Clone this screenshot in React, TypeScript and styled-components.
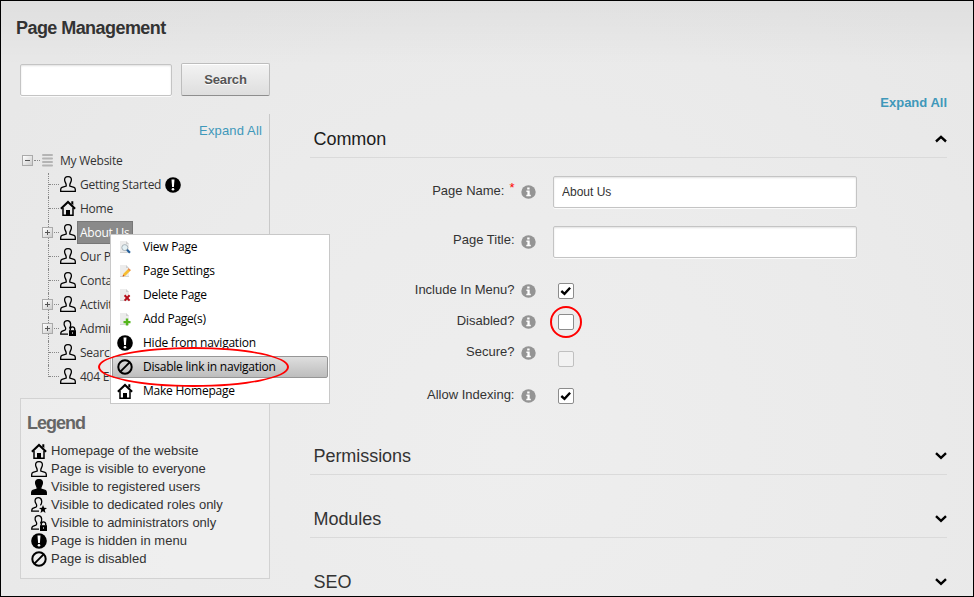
import React from "react";
import styled, { createGlobalStyle, css } from "styled-components";

const GlobalStyle = createGlobalStyle`
  *, *::before, *::after { box-sizing: border-box; }
  body { margin: 0; font-family: "Liberation Sans", Arial, sans-serif; font-size: 13px; color: #333; }
  h1, h2, h3, ul { margin: 0; padding: 0; font-weight: normal; }
  ul { list-style: none; }
  svg { display: block; flex: none; }
`;

const Frame = styled.div`
  position: relative;
  width: 974px;
  height: 597px;
  border: 1px solid #000;
  overflow: hidden;
  display: flex;
  flex-direction: column;
  background:
    linear-gradient(to bottom, rgba(0, 0, 0, 0.04), rgba(0, 0, 0, 0) 65px),
    radial-gradient(circle at 505px 450px, #eeeeee 0, #ebebeb 350px, #e8e8e8 600px);
`;

const Title = styled.h1`
  flex: none;
  height: 62px;
  padding: 16px 0 0 15px;
  font-size: 18px;
  line-height: 22px;
  font-weight: bold;
  letter-spacing: -0.56px;
`;

const Columns = styled.div`
  flex: none;
  display: flex;
  align-items: flex-start;
  gap: 40px;
  padding-left: 19px;
`;

const Sidebar = styled.aside`
  width: 250px;
`;

const SearchBar = styled.div`
  display: flex;
  justify-content: space-between;
  align-items: flex-end;
  height: 33px;
`;

const TextInput = styled.input<{ $width: number }>`
  display: block;
  width: ${(p) => p.$width}px;
  height: 32px;
  padding: 0 8px;
  border: 1px solid #c4c4c4;
  border-radius: 2px;
  background: #fff;
  box-shadow: inset 0 1px 2px rgba(0, 0, 0, 0.12), 0 1px 0 #fafafa;
  font: 12px "Liberation Sans", Arial, sans-serif;
  color: #333;
  outline: none;
`;

const SearchButton = styled.button`
  width: 89px;
  height: 33px;
  padding: 0;
  border: 1px solid #bdbdbd;
  border-bottom-color: #8e8e8e;
  border-radius: 2px;
  background: linear-gradient(#f3f3f3, #dedede);
  box-shadow: inset 0 1px 0 #fff;
  font: bold 13px "Liberation Sans", Arial, sans-serif;
  letter-spacing: -0.15px;
  color: #555;
  text-shadow: 0 1px 0 #fff;
`;

const ExpandLink = styled.a<{ $bold?: boolean }>`
  display: block;
  text-align: right;
  line-height: 16px;
  color: #3f98ba;
  font-weight: ${(p) => (p.$bold ? "bold" : "normal")};
  letter-spacing: ${(p) => (p.$bold ? "0" : "0.15px")};
`;

const TreePanel = styled.div`
  height: 284px;
  margin-top: 18px;
  padding: 9px 7px 0 0;
  border-right: 1px solid #c9c9c9;
`;

const segoeLike = css`
  font-family: "Open Sans", "Noto Sans", sans-serif;
  font-size: 12px;
  letter-spacing: -0.24px;
`;

const Tree = styled.ul`
  ${segoeLike}
  margin-top: 10px;
`;

const TreeRoot = styled.li`
  display: flex;
  align-items: center;
  height: 22px;
  padding-left: 2px;
`;

const RootDots = styled.span`
  width: 6px;
  margin: 0 1px 0 1px;
  border-top: 1px dotted #888;
`;

const RootLabel = styled.span`
  margin-left: 7px;
`;

const Branches = styled.ul`
  margin: 2px 0 0 28px;
`;

const Branch = styled.li`
  position: relative;
  display: flex;
  align-items: center;
  height: 24px;
  padding-left: 12px;

  &::before {
    content: "";
    position: absolute;
    left: 0;
    top: 0;
    height: 24px;
    border-left: 1px dotted #888;
  }
  &:last-child::before { height: 12px; }
  &::after {
    content: "";
    position: absolute;
    left: 1px;
    top: 11px;
    width: 10px;
    border-top: 1px dotted #888;
  }
`;

const Toggle = styled.span<{ $floating?: boolean }>`
  display: block;
  width: 11px;
  height: 11px;
  border: 1px solid #aaa;
  background: linear-gradient(135deg, #fff, #ccc);
  ${(p) =>
    p.$floating &&
    css`
      position: absolute;
      left: -6px;
      top: 6px;
      z-index: 1;
    `}
`;

const BranchIcon = styled.span`
  margin-top: -2px;
`;

const BranchLabel = styled.span<{ $selected?: boolean }>`
  height: 23px;
  line-height: 22px;
  padding: 0 3px;
  margin: 0 1px;
  white-space: nowrap;
  ${(p) =>
    p.$selected &&
    css`
      margin-top: -2px;
      padding: 0 3px 0 2px;
      line-height: 21px;
      border: 1px solid #777;
      background: #8a8a8a;
      color: #fff;
    `}
`;

const Legend = styled.section`
  height: 181px;
  padding: 13px 6px 0;
  border: 1px solid #d2d2d2;
  background: rgba(255, 255, 255, 0.2);
`;

const LegendTitle = styled.h2`
  margin-bottom: 7px;
  font-size: 18px;
  line-height: 22px;
  font-weight: bold;
  letter-spacing: -1px;
  color: #666;
`;

const LegendItem = styled.li`
  display: flex;
  align-items: center;
  height: 18px;
  padding: 1px 0 0 4px;
  gap: 4px;
  white-space: nowrap;
`;

const LegendText = styled.span`
  margin-top: -1px;
`;

const Main = styled.main`
  width: 637px;
  padding-top: 32px;
`;

const SectionHeader = styled.header<{ $height: number; $strong?: boolean }>`
  display: flex;
  align-items: flex-end;
  justify-content: space-between;
  height: ${(p) => p.$height}px;
  padding: 0 0 8px 3.5px;
  border-bottom: 1px solid #dadada;
  font-size: 18px;
  line-height: 20px;
  color: ${(p) => (p.$strong ? "#1c1c1c" : "#333")};
`;

const SectionTitle = styled.h3`
  font-size: 18px;
  letter-spacing: -0.05px;
`;

const Form = styled.form`
  height: 254px;
  padding-top: 18px;
`;

const Field = styled.div<{ $tall?: boolean; $gap: number }>`
  display: grid;
  grid-template-columns: 204.5px 16px 1fr;
  grid-template-rows: 100%;
  height: ${(p) => (p.$tall ? 32 : 16)}px;
  margin-bottom: ${(p) => p.$gap}px;
  align-items: center;
`;

const Label = styled.label<{ $lift: number }>`
  text-align: right;
  line-height: 16px;
  margin-top: -${(p) => p.$lift}px;
`;

const Required = styled.span`
  display: inline-block;
  margin-left: 5px;
  color: #f00;
  line-height: 10px;
  transform: translateY(-3px);
`;

const InfoSlot = styled.span`
  padding-left: 6px;
`;

const ControlSlot = styled.div`
  padding-left: 22.5px;
`;

const CheckBox = styled.span<{ $disabled?: boolean }>`
  display: flex;
  align-items: center;
  justify-content: center;
  width: 16px;
  height: 16px;
  margin: ${(p) => (p.$disabled ? "12px" : "0")} 0 0 5px;
  border: 1px solid ${(p) => (p.$disabled ? "#c0c0c0" : "#8c8c8c")};
  border-radius: 2px;
  background: ${(p) => (p.$disabled ? "#f2f2f2" : "#fff")};
`;

const Menu = styled.ul`
  ${segoeLike}
  position: absolute;
  left: 109px;
  top: 233px;
  width: 220px;
  height: 170px;
  padding: 0 1px;
  border: 1px solid #c8c8c8;
  background: #fff;
  color: #000;
`;

const MenuItem = styled.li<{ $active?: boolean }>`
  display: flex;
  align-items: center;
  height: 22px;
  margin: 1px 0 2px;
  padding-left: 4px;
  gap: 10px;
  border: 1px solid ${(p) => (p.$active ? "#969696" : "transparent")};
  border-radius: 2px;
  background: ${(p) => (p.$active ? "linear-gradient(#dedede, #bdbdbd)" : "none")};
  white-space: nowrap;
`;

const MenuText = styled.span`
  margin-top: -1px;
`;

const Highlight = styled.span<{ $x: number; $y: number; $w: number; $h: number }>`
  position: absolute;
  left: ${(p) => p.$x}px;
  top: ${(p) => p.$y}px;
  width: ${(p) => p.$w}px;
  height: ${(p) => p.$h}px;
  border: 2px solid #f00;
  border-radius: 50%;
  pointer-events: none;
`;

type IconName = "home" | "person" | "registered" | "role" | "admin" | "hidden" | "disabled";

const cutPerson =
  "M9.4 8.4C11.2 6.4 11.6 .7 7.4 .7C3.4 .7 3.6 4.6 5 6.7C5.9 8 6 9.6 4.8 10.2L1.8 11.4Q.7 12 .7 14.2H8";
const fullPerson =
  "M8 .7C5 .7 4.3 2.4 4.7 4.6C5 6.3 6.2 7.4 6.2 9V10L2 11.4Q.7 12 .7 13.5V15.3H15.3V13.5Q15.3 12 14 11.4L9.8 10V9C9.8 7.4 11 6.3 11.3 4.6C11.7 2.4 11 .7 8 .7Z";

function Icon({ name }: { name: IconName }) {
  return (
    <svg width="16" height="16" viewBox="0 0 16 16" fill="none" stroke="#000" strokeWidth="1.3">
      {name === "home" && (
        <>
          <path d="M11.3 1.2h2v4l-2-2z" fill="#000" stroke="none" />
          <path d="M.9 8.7 8 2l7.1 6.7" strokeWidth="2.1" />
          <path d="M3 8v7.2h10V8" strokeWidth="1.5" />
          <path d="M6 15.5V10h4v5.5z" fill="#000" stroke="none" />
        </>
      )}
      {name === "person" && <path d={fullPerson} />}
      {name === "registered" && <path d={fullPerson} fill="#000" />}
      {name === "role" && (
        <>
          <path d={cutPerson} />
          <path d="m12 8 1.1 2.8 2.9.1-2.3 1.9.8 3.1-2.5-1.7-2.5 1.7.8-3.1L8 10.9l2.9-.1z" fill="#000" stroke="none" />
        </>
      )}
      {name === "admin" && (
        <>
          <path d={cutPerson} />
          <path d="M9 10.2h7V16H9z" fill="#000" stroke="none" />
          <path d="M10.3 10.5V9.1a2.2 2.2 0 0 1 4.4 0v1.4" strokeWidth="1.4" />
          <path d="M12.5 12v2" stroke="#999" strokeWidth="1" />
        </>
      )}
      {name === "hidden" && (
        <>
          <circle cx="8" cy="8" r="7.8" fill="#000" stroke="none" />
          <path d="M6.5 2.5h3L8.9 10H7.1z" fill="#fff" stroke="none" />
          <circle cx="8" cy="12.3" r="1.3" fill="#fff" stroke="none" />
        </>
      )}
      {name === "disabled" && (
        <>
          <circle cx="8" cy="8" r="6.7" strokeWidth="2" />
          <path d="M12.6 3.4 3.4 12.6" strokeWidth="2" />
        </>
      )}
    </svg>
  );
}

type PageAction = "view" | "edit" | "delete" | "add";

function PageIcon({ action }: { action: PageAction }) {
  return (
    <svg width="16" height="16" viewBox="0 0 16 16" fill="none">
      <path d="M3 2h6l3 3v9H3z" fill="#ececec" />
      <path d="M9 2v3h3z" fill="#cfcfcf" />
      <path d="M3 13.5h9" stroke="#d4d4d4" />
      {action === "view" && (
        <>
          <circle cx="7.8" cy="8.6" r="3" fill="#e3f0f4" stroke="#aab3b8" />
          <path d="m10 10.8 3 3" stroke="#245f9a" strokeWidth="2.2" />
        </>
      )}
      {action === "edit" && (
        <>
          <path d="m5.6 13.5.8-2.8 5.2-5.2 2 2-5.2 5.2z" fill="#f7bd32" />
          <path d="m10.8 6.3.8-1.2 2.2 2-1.1 1.2z" fill="#e58a57" />
          <path d="m5.6 13.5.5-1.7 1.3 1.2z" fill="#c0392b" />
        </>
      )}
      {action === "delete" && <path d="m7.6 8.2 5 5.4m0-5.4-5 5.4" stroke="#b60c19" strokeWidth="2" />}
      {action === "add" && <path d="M10 7.6v7M6.5 11.1h7" stroke="#55b51d" strokeWidth="2.4" />}
    </svg>
  );
}

function InfoIcon() {
  return (
    <svg width="15" height="14" viewBox="0 0 15 14">
      <ellipse cx="7.5" cy="7" rx="7.2" ry="6.8" fill="#949494" />
      <path d="M6.2 2.4h2.4v2H6.2zM5.4 5.5h3.3v4.3h1.1v1.5H5.3V9.8h1.1V7h-1z" fill="#fff" />
    </svg>
  );
}

function Chevron({ up }: { up?: boolean }) {
  return (
    <svg width="12" height="20" viewBox="0 0 12 20" fill="none" stroke="#000" strokeWidth="2.4">
      <path d={up ? "m1 12.5 5-4.6 5 4.6" : "m1 7.2 5 4.6 5-4.6"} />
    </svg>
  );
}

function ToggleSign({ plus, floating }: { plus?: boolean; floating?: boolean }) {
  return (
    <Toggle $floating={floating}>
      <svg width="9" height="9" viewBox="0 0 9 9" stroke="#555">
        <path d={plus ? "M2 4.5h5M4.5 2v5" : "M2 4.5h5"} />
      </svg>
    </Toggle>
  );
}

const pages: { label: string; icon: IconName; plus?: boolean; selected?: boolean; hidden?: boolean }[] = [
  { label: "Getting Started", icon: "person", hidden: true },
  { label: "Home", icon: "home" },
  { label: "About Us", icon: "person", plus: true, selected: true },
  { label: "Our Projects", icon: "person" },
  { label: "Contact Us", icon: "person" },
  { label: "Activities", icon: "person", plus: true },
  { label: "Admin", icon: "admin", plus: true },
  { label: "Search", icon: "person" },
  { label: "404 Error", icon: "person" },
];

const legend: { icon: IconName; text: string }[] = [
  { icon: "home", text: "Homepage of the website" },
  { icon: "person", text: "Page is visible to everyone" },
  { icon: "registered", text: "Visible to registered users" },
  { icon: "role", text: "Visible to dedicated roles only" },
  { icon: "admin", text: "Visible to administrators only" },
  { icon: "hidden", text: "Page is hidden in menu" },
  { icon: "disabled", text: "Page is disabled" },
];

const options: { label: string; gap: number; checked?: boolean; disabled?: boolean }[] = [
  { label: "Include In Menu?", gap: 15, checked: true },
  { label: "Disabled?", gap: 15 },
  { label: "Secure?", gap: 27, disabled: true },
  { label: "Allow Indexing:", gap: 0, checked: true },
];

const menuItems: { text: string; icon: React.ReactNode; active?: boolean }[] = [
  { text: "View Page", icon: <PageIcon action="view" /> },
  { text: "Page Settings", icon: <PageIcon action="edit" /> },
  { text: "Delete Page", icon: <PageIcon action="delete" /> },
  { text: "Add Page(s)", icon: <PageIcon action="add" /> },
  { text: "Hide from navigation", icon: <Icon name="hidden" /> },
  { text: "Disable link in navigation", icon: <Icon name="disabled" />, active: true },
  { text: "Make Homepage", icon: <Icon name="home" /> },
];

export default function App() {
  return (
    <>
      <GlobalStyle />
      <Frame>
        <Title>Page Management</Title>
        <Columns>
          <Sidebar>
            <SearchBar>
              <TextInput $width={152} aria-label="Search pages" />
              <SearchButton>Search</SearchButton>
            </SearchBar>
            <TreePanel>
              <ExpandLink>Expand All</ExpandLink>
              <Tree>
                <TreeRoot>
                  <ToggleSign />
                  <RootDots />
                  <svg width="12" height="14" viewBox="0 0 12 14" fill="#b4b4b4">
                    <rect x="1" y="1" width="11" height="2" rx="1" />
                    <rect x="1" y="4.5" width="11" height="2" rx="1" />
                    <rect x="1" y="8" width="11" height="2" rx="1" />
                    <rect x="1" y="11.5" width="11" height="2" rx="1" />
                  </svg>
                  <RootLabel>My Website</RootLabel>
                </TreeRoot>
                <Branches>
                  {pages.map((page) => (
                    <Branch key={page.label}>
                      {page.plus && <ToggleSign plus floating />}
                      <BranchIcon>
                        <Icon name={page.icon} />
                      </BranchIcon>
                      <BranchLabel $selected={page.selected}>{page.label}</BranchLabel>
                      {page.hidden && <Icon name="hidden" />}
                    </Branch>
                  ))}
                </Branches>
              </Tree>
            </TreePanel>
            <Legend>
              <LegendTitle>Legend</LegendTitle>
              <ul>
                {legend.map((item) => (
                  <LegendItem key={item.text}>
                    <Icon name={item.icon} />
                    <LegendText>{item.text}</LegendText>
                  </LegendItem>
                ))}
              </ul>
            </Legend>
          </Sidebar>
          <Main>
            <ExpandLink $bold>Expand All</ExpandLink>
            <SectionHeader $height={47} $strong>
              <SectionTitle>Common</SectionTitle>
              <Chevron up />
            </SectionHeader>
            <Form>
              <Field $tall $gap={18}>
                <Label $lift={2}>
                  Page Name:<Required>*</Required>
                </Label>
                <InfoSlot>
                  <InfoIcon />
                </InfoSlot>
                <ControlSlot>
                  <TextInput $width={304} defaultValue="About Us" />
                </ControlSlot>
              </Field>
              <Field $tall $gap={25}>
                <Label $lift={4}>Page Title:</Label>
                <InfoSlot>
                  <InfoIcon />
                </InfoSlot>
                <ControlSlot>
                  <TextInput $width={304} />
                </ControlSlot>
              </Field>
              {options.map((option) => (
                <Field key={option.label} $gap={option.gap}>
                  <Label $lift={2}>{option.label}</Label>
                  <InfoSlot>
                    <InfoIcon />
                  </InfoSlot>
                  <ControlSlot>
                    <CheckBox $disabled={option.disabled}>
                      {option.checked && (
                        <svg width="12" height="12" viewBox="0 0 12 12" fill="none" stroke="#000" strokeWidth="2.4">
                          <path d="m1.3 6 3.2 2.8 5.6-6" />
                        </svg>
                      )}
                    </CheckBox>
                  </ControlSlot>
                </Field>
              ))}
            </Form>
            {["Permissions", "Modules", "SEO"].map((title) => (
              <SectionHeader key={title} $height={63}>
                <SectionTitle>{title}</SectionTitle>
                <Chevron />
              </SectionHeader>
            ))}
          </Main>
        </Columns>
        <Menu>
          {menuItems.map((item) => (
            <MenuItem key={item.text} $active={item.active}>
              {item.icon}
              <MenuText>{item.text}</MenuText>
            </MenuItem>
          ))}
        </Menu>
        <Highlight $x={97} $y={346} $w={191} $h={40} />
        <Highlight $x={549} $y={305} $w={32} $h={32} />
      </Frame>
    </>
  );
}
